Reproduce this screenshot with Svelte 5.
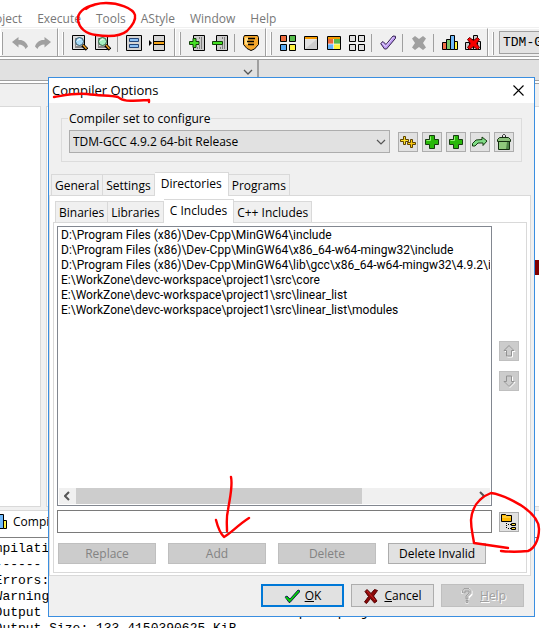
<script>
  const glyph = {
    undo: '<path d="M0 7l6.500-5v3c4.500-.5 8 2 9.500 6.500l-2.500 2.500c-1-3-3.500-4.500-7-4.500v3z" fill="#a0a0a0"/>',
    redo: '<path d="M16 7l-6.500-5v3c-4.500-.5-8 2-9.500 6.500l2.500 2.500c1-3 3.500-4.500 7-4.500v3z" fill="#a0a0a0"/>',
    find: '<path d="M.5.5h12v14H.5z" fill="#ddd" stroke="#000"/><path d="M3 4h2M3 6h1M3 8h1M3 10h1M3 12h8" stroke="#333"/><circle cx="7.500" cy="6.500" r="4" fill="#a9dcf8" stroke="#356" /><path d="M5.500 6c.5-1.500 2-2 3-1.500" stroke="#fff" fill="none"/><path d="M10.500 10l4.500 4.500" stroke="#000" stroke-width="3.500"/><path d="M11 10l3.500 3.800" stroke="#f0a020" stroke-width="1.500"/>',
    replace: '<path d="M.5.5h12v14H.5z" fill="#ddd" stroke="#000"/><path d="M3 4h2M3 6h1M3 8h1M3 10h1M3 12h8" stroke="#333"/><circle cx="7.500" cy="6.500" r="4" fill="#a5efc0" stroke="#364" /><path d="M5.500 6c.5-1.500 2-2 3-1.500" stroke="#fff" fill="none"/><path d="M10.500 10l4.500 4.500" stroke="#000" stroke-width="3.500"/><path d="M11 10l3.500 3.800" stroke="#f0a020" stroke-width="1.500"/>',
    split: '<path d="M.5.5h15v15H.5z" fill="#d4d4d4" stroke="#000"/><path d="M3.500 3.500h9v3h-9zM3.500 9.500h9v3h-9z" fill="#8ac0f5" stroke="#247"/>',
    line: '<path d="M4.500.5h11v15h-11z" fill="#d4d4d4" stroke="#000"/><path d="M4.500 6.500h11v3h-11z" fill="#f4a51c" stroke="#000"/><path d="M0 5l3 3-3 3z"/>',
    add: '<path d="M4.500.5h11v15h-11z" fill="#ccc" stroke="#000"/><path d="M10 3h1M12 3h1M12 5h1M12 7h1M12 9h1M10 11h1M12 11h1M8 13h1M10 13h1M12 13h1" stroke="#333"/><path d="M4 3.500h3v3h3v3H7v3H4v-3H.5v-3H4z" fill="#45df25" stroke="#123f09"/>',
    minus: '<path d="M4.500.5h11v15h-11z" fill="#ccc" stroke="#000"/><path d="M10 3h1M12 3h1M12 5h1M12 7h1M12 9h1M10 11h1M12 11h1M8 13h1M10 13h1M12 13h1" stroke="#333"/><path d="M.5 6.500h10v3H.5z" fill="#45df25" stroke="#123f09"/>',
    shield: '<path d="M1.500.5h13l1 2v7l-4 4.500-3.500 1.500L4 13.500.5 9.500v-7z" fill="#f5a72c" stroke="#000"/><path d="M2 2.500h3v7H2z" fill="#ffdc84"/><path d="M5 3.500h7M4 6.500h7M5 9.500h6" stroke="#000" stroke-width="1.300"/>',
    grid: '<path d="M.5.5h6v6h-6z" fill="#ee6b3c" stroke="#000"/><path d="M9.500.5h6v6h-6z" fill="#55bc4b" stroke="#000"/><path d="M.5 9.500h6v6h-6z" fill="#58a9f5" stroke="#000"/><path d="M9.500 9.500h6v6h-6z" fill="#fff33f" stroke="#000"/>',
    pane: '<path d="M1.500 1.500h13v13h-13z" fill="#e2e2e2" stroke="#000"/><path d="M2 14L14 4v10z" fill="#ccc"/><path d="M2 3h12" stroke="#f59a00" stroke-width="2"/>',
    colorpane: '<path d="M2 4h6v5H2z" fill="#e9693b"/><path d="M8 4h6v5H8z" fill="#54b94a"/><path d="M2 9h6v5H2z" fill="#65b2f7"/><path d="M8 9h6v5H8z" fill="#fff33f"/><path d="M7.500 4v10M2 9h12" stroke="#fff" stroke-width=".7"/><path d="M1.500 1.500h13v13h-13z" fill="none" stroke="#000"/><path d="M2 3h12" stroke="#f59a00" stroke-width="2"/>',
    graygrid: '<path d="M.5.5h6v6h-6zM9.500.5h6v6h-6zM.5 9.500h6v6h-6zM9.500 9.500h6v6h-6z" fill="#e0e0e0" stroke="#000"/>',
    check: '<path d="M.7 8.500l2.300-2 3 3 7-8.500 2.500.3v2L6.500 14h-2z" fill="#bd9bf2" stroke="#33204f"/><path d="M2 8l3.500 3.500 8-9.500" fill="none" stroke="#e3d2ff"/>',
    cross: '<path d="M1 3.500l3-2.500 4 3 4-3 3 2.500-3 4.500 3 4.500-3 2.500-4-3-4 3-3-2.500 3-4.500z" fill="#a0a0a0"/>',
    chart: '<path d="M.5 7.500h4v7h-4z" fill="#ef7147" stroke="#000"/><path d="M4.500 4.500h4v10h-4z" fill="#78c66b" stroke="#000"/><path d="M12.500 6.500h3v8h-3z" fill="#fff33f" stroke="#000"/><path d="M8.500.5h4v14h-4z" fill="#70b9fa" stroke="#000"/>',
    chartx: '<path d="M.5 7.500h4v7h-4zM4.500 4.500h4v10h-4zM12.500 6.500h3v8h-3zM8.500.5h4v14h-4z" fill="#ccc" stroke="#000"/><path d="M2.500 4.500l2-2 4 3 4-3 2 2-3 4 3 4-2 2-4-3-4 3-2-2 3-4z" fill="#f60000" stroke="#600"/>',
    stars: '<path d="M3.500 2.500h2v3h3v2h-3v3h-2v-3h-3v-2h3z" fill="#fde02a" stroke="#5d4300"/><path d="M10.500 5.500h2v3h3v2h-3v3h-2v-3h-3v-2h3z" fill="#fbc810" stroke="#5d4300"/>',
    plus: '<path d="M5.500 1.500h5v4h4v5h-4v4h-5v-4h-4v-5h4z" fill="#29b80b" stroke="#163c10"/><path d="M6.500 2.500v4h-4" fill="none" stroke="#8df06c"/>',
    arrow: '<path d="M.5 12v-2.500L4 6l6-.5V3l5 4-4 4.500V9L6 9l-3 3z" fill="#7fdb85" stroke="#163c10"/>',
    bin: '<path d="M6.500 3.500v-2l1-1h1l1 1v2" fill="none" stroke="#222"/><path d="M3.500 3.500h9l2 2v2h-13v-2z" fill="#8ac07a" stroke="#132e10"/><path d="M2.500 7.500h11v8h-11z" fill="#8fc97d" stroke="#132e10"/><path d="M11 8h2v7h-3z" fill="#4f8549"/>',
    up: '<path d="M9 3.500l5 5h-2.500V14h-5V8.500H4z" fill="none" stroke="#fff"/><path d="M8 2.500l5 5h-2.500V13h-5V7.500H3z" fill="#ccc" stroke="#929292"/>',
    down: '<path d="M9 14.500l5-5h-2.500V4h-5v5.500H4z" fill="none" stroke="#fff"/><path d="M8 13.500l5-5h-2.500V3h-5v5.500H3z" fill="#ccc" stroke="#929292"/>',
    folder: '<path d="M.5 7.500v-7h4l1 1h5v6z" fill="#ffb900" stroke="#000"/><path d="M1 3h9" stroke="#ffe16d"/><path d="M5.500 9v6M7 10.500h3M7 14.500h3" stroke="#000" stroke-dasharray="1 1"/><path d="M10.500 9.500h4v2h-4zM10.500 13.500h4v2h-4z" fill="#ffdd38" stroke="#000"/>',
    ok: '<path d="M1 9l2-1 3 3 8-9 1.500.5v1.500L6 14.500h-1z" fill="#00b900" stroke="#000050" stroke-width=".8"/><path d="M1.500 9L5.500 13l9-10" fill="none" stroke="#0ddd0d"/>',
    cancel: '<path d="M2 3.500l2-2 4 4 3.500-4 3 1-4 5.500 3.500 5-2.500 2-4-4.500-4 5-2-1.500 4-5.500z" fill="#8b0909" stroke="#500"/><path d="M4 3l8 9" stroke="#c22"/>',
    help: '<path d="M4 6V3.500l2-2h4l2 2v3L9 9.500v2M8 13v2.500" fill="none" stroke="#fff" stroke-width="3"/><path d="M3.500 5V2.500L5 .5h5l2 2v3L9 8.500V11H7V8l3-3V3H6v2zM7 12.500h2v2H7z" fill="#ccc" stroke="#929292" stroke-width=".8"/>'
  };

  const bands = [
    ['undo', 'redo'],
    ['find', 'replace', '|', 'split', 'line'],
    ['add', 'minus', '|', 'shield'],
    ['grid', 'pane', 'colorpane', 'graygrid', '|', 'check', '|', 'cross', '|', 'chart', 'chartx']
  ];
  const menu = ['Project', 'Execute', 'Tools', 'AStyle', 'Window', 'Help'];
  const outer = ['General', 'Settings', 'Directories', 'Programs'];
  const inner = ['Binaries', 'Libraries', 'C Includes', 'C++ Includes'];
  const paths = [
    'D:\\Program Files (x86)\\Dev-Cpp\\MinGW64\\include',
    'D:\\Program Files (x86)\\Dev-Cpp\\MinGW64\\x86_64-w64-mingw32\\include',
    'D:\\Program Files (x86)\\Dev-Cpp\\MinGW64\\lib\\gcc\\x86_64-w64-mingw32\\4.9.2\\include',
    'E:\\WorkZone\\devc-workspace\\project1\\src\\core',
    'E:\\WorkZone\\devc-workspace\\project1\\src\\linear_list',
    'E:\\WorkZone\\devc-workspace\\project1\\src\\linear_list\\modules'
  ];
  const log = `Compilation results...
--------
- Errors: 0
- Warnings: 0
- Output Filename: E:\\WorkZone\\devc-workspace\\project1\\src\\main.exe
- Output Size: 133.4150390625 KiB`;

  let outerTab = $state('Directories');
  let innerTab = $state('C Includes');
  let path = $state('');
</script>

{#snippet icon(name)}
  <svg class="icon" viewBox="0 0 16 16" aria-hidden="true">{@html glyph[name]}</svg>
{/snippet}

<div class="app">
  <nav class="menu">
    {#each menu as m}<button>{m}</button>{/each}
  </nav>
  <div class="toolbar">
    {#each bands as band}
      <div class="band">
        {#each band as b}
          {#if b === '|'}<span class="sep"></span>
          {:else}<button class="tool" aria-label={b}>{@render icon(b)}</button>{/if}
        {/each}
      </div>
    {/each}
    <div class="band last">
      <select class="profile" aria-label="Compiler profile"><option>TDM-GCC 4.9.2 64-bit Release</option></select>
    </div>
  </div>
  <div class="scope">
    <button class="combo first" aria-label="Scope">
      <svg viewBox="0 0 10 6" width="10" height="6"><path d="M1 1l4 4 4-4" fill="none" stroke="#555" stroke-width="1.3" /></svg>
    </button>
    <button class="combo" aria-label="Member"></button>
  </div>
  <main class="work">
    <div class="tree"></div>
    <div class="editor"><div class="mark"></div></div>
  </main>
  <section class="output">
    <div class="outtab">{@render icon('chart')}<span>Compile Log</span></div>
    <pre>{log}</pre>
  </section>
</div>

<div class="dialog" role="dialog" aria-labelledby="title">
  <header>
    <h1 id="title">Compiler Options</h1>
    <button class="close" aria-label="Close">
      <svg viewBox="0 0 11 11" width="11" height="11"><path d="M.5.5l10 10M10.500.5l-10 10" stroke="#000" stroke-width="1.1" /></svg>
    </button>
  </header>

  <fieldset>
    <legend><label for="set">Compiler set to configure</label></legend>
    <div class="setrow">
      <div class="pick">
        <select id="set"><option>TDM-GCC 4.9.2 64-bit Release</option></select>
        <svg viewBox="0 0 10 6" width="10" height="6"><path d="M1 1l4 4 4-4" fill="none" stroke="#555" stroke-width="1.2" /></svg>
      </div>
      {#each ['stars', 'plus', 'plus', 'arrow', 'bin'] as b}
        <button class="small" aria-label={b}>{@render icon(b)}</button>
      {/each}
    </div>
  </fieldset>

  <div class="tabs" role="tablist">
    {#each outer as t}
      <button role="tab" aria-selected={outerTab === t} class:on={outerTab === t} onclick={() => (outerTab = t)}>{t}</button>
    {/each}
  </div>
  <div class="panel">
    <div class="tabs" role="tablist">
      {#each inner as t}
        <button role="tab" aria-selected={innerTab === t} class:on={innerTab === t} onclick={() => (innerTab = t)}>{t}</button>
      {/each}
    </div>
    <div class="panel inner">
      <div class="row">
        <div class="listbox">
          <ul>
            {#each paths as p}<li>{p}</li>{/each}
          </ul>
          <div class="scroll">
            <svg viewBox="0 0 6 10" width="6" height="10"><path d="M5 1L1 5l4 4" fill="none" stroke="#555" stroke-width="2" /></svg>
            <div class="track"><div class="thumb"></div></div>
            <svg viewBox="0 0 6 10" width="6" height="10"><path d="M1 1l4 4-4 4" fill="none" stroke="#555" stroke-width="2" /></svg>
          </div>
        </div>
        <div class="side">
          <button class="small" disabled aria-label="Move up">{@render icon('up')}</button>
          <button class="small" disabled aria-label="Move down">{@render icon('down')}</button>
        </div>
      </div>
      <div class="row entry">
        <input type="text" aria-label="Directory" bind:value={path} />
        <button class="small" aria-label="Browse">{@render icon('folder')}</button>
      </div>
      <div class="row actions">
        <button disabled>Replace</button>
        <button disabled>Add</button>
        <button disabled>Delete</button>
        <button>Delete Invalid</button>
      </div>
    </div>
  </div>

  <footer>
    <button class="primary">{@render icon('ok')}<span><u>O</u>K</span></button>
    <button>{@render icon('cancel')}<span><u>C</u>ancel</span></button>
    <button class="off" disabled>{@render icon('help')}<span><u>H</u>elp</span></button>
  </footer>
</div>

<svg class="ink" viewBox="0 0 541 628" width="541" height="628" aria-hidden="true">
  <g fill="none" stroke="#f00" stroke-width="2.4" stroke-linecap="round" stroke-linejoin="round">
    <path d="M94 5C84 7 77 13 78 20C79 28 86 34 96 35C110 37 121 36 127 31C132 26 136 20 135 15C133 8 118 3 106 3C99 3 90 5 86 9" />
    <path d="M54 97C66 95 74 93 87 94C100 96 110 95 118 97C123 102 130 101 149 100L149 102" />
    <path d="M231 477C233 486 230 497 228 510C226 518 227 524 227 531M216 520C218 528 221 534 224 537C231 533 238 525 249 518" />
    <path d="M508 548L474 543C473 535 471 530 471 520C472 508 478 498 491 493C505 495 515 502 522 506C531 512 539 520 539 529C539 540 534 549 528 551C518 552 510 552 501 551" />
  </g>
</svg>

<style>
  :global(body) { margin: 0; background: #fff; }
  .app, .dialog { font: 12px/15px "Open Sans", "Noto Sans", sans-serif; color: #000; }
  .app { height: 100vh; display: flex; flex-direction: column; overflow: hidden; padding-right: 2px; box-sizing: border-box; }
  button, input, select { font: inherit; color: inherit; box-sizing: border-box; margin: 0; padding: 0; border-radius: 0; }
  .icon { width: 16px; height: 16px; flex: none; display: block; }

  .menu { height: 27px; flex: none; display: flex; gap: 15px; align-items: flex-end; padding-bottom: 1px; box-sizing: border-box; margin-left: -17px; }
  .menu button { border: 0; background: none; color: #777; }
  .toolbar { height: 30px; flex: none; display: flex; background: #f0f0f0; border-bottom: 1px solid #a0a0a0; box-sizing: border-box; padding-top: 1px; margin-bottom: 2px; }
  .band { display: flex; align-items: center; flex: none; position: relative; padding: 0 3px 0 10px; border-left: 1px solid #a0a0a0; border-top: 1px solid #fff; box-shadow: inset 1px 0 #fff; }
  .band:first-child { padding-left: 8px; border-left: 0; }
  .band:nth-child(2) { padding-right: 6px; }
  .band::before { content: ""; position: absolute; left: 4px; top: 3px; bottom: 1px; width: 1px; border-right: 1px solid #a0a0a0; background: #fff; }
  .band:first-child::before { left: 1px; }
  .tool { width: 23px; height: 23px; border: 0; background: none; display: grid; place-items: center; }
  .sep { width: 1px; height: 18px; background: #a0a0a0; margin: 0 4px 0 3px; }
  .band.last { flex: 1; min-width: 0; padding: 0 0 0 11px; overflow: hidden; }
  .profile { appearance: none; flex: 1; min-width: 0; height: 23px; background: #e3e3e3; border: 1px solid #a0a0a0; border-right: 0; padding-left: 3px; font: 13px "Liberation Mono", monospace; }
  .scope { height: 22px; flex: none; display: flex; box-sizing: border-box; border-top: 1px solid #a0a0a0; border-bottom: 1px solid #a0a0a0; }
  .combo { border: 0; background: #e1e1e1; flex: 1; }
  .combo.first { flex: 0 0 48%; border-right: 2px solid #a0a0a0; text-align: right; padding-right: 4px; }
  .work { flex: 1; display: flex; gap: 5px; background: #f0f0f0; border-top: 1px solid #a0a0a0; margin-top: 2px; padding: 22px 0 3px; }
  .tree { width: 41px; background: #fff; border: 1px solid #d9d9d9; border-left: 0; box-sizing: border-box; }
  .editor { flex: 1; background: #fff; border: 1px solid #d9d9d9; border-right: 0; padding: 153px 0 0 16px; }
  .mark { height: 15px; background: #800000; }
  .output { height: 118px; flex: none; background: #fff; border-top: 1px solid #d9d9d9; box-sizing: border-box; }
  .outtab { height: 27px; box-sizing: border-box; border-bottom: 1px solid #808080; display: flex; align-items: center; gap: 6px; margin-left: -9px; padding-bottom: 5px; }
  pre { margin: 3px 0 0 -21px; font: 13px/16px "Liberation Mono", monospace; }

  .dialog { position: absolute; left: 48px; right: 6px; top: 77px; background: #f0f0f0; border: 1px solid #3a8ee0; box-sizing: border-box; }
  header { background: #fff; height: 25px; display: flex; align-items: center; justify-content: space-between; padding: 0 10px 0 3px; }
  h1 { margin: 0; font-size: 13px; font-weight: 400; }
  .close { border: 0; background: none; display: grid; }
  fieldset { margin: 8px 12px 0; border: 1px solid #dcdcdc; padding: 4px 7px 8px; min-width: 0; }
  legend { padding: 0 1px; margin-left: -1px; height: 15px; }
  .setrow { display: flex; align-items: center; gap: 4px; }
  .pick { flex: 1; display: grid; align-items: center; margin-right: 4px; }
  .pick select, .pick svg { grid-area: 1 / 1; }
  .pick svg { justify-self: end; margin-right: 4px; pointer-events: none; }
  .pick select { appearance: none; height: 23px; width: 100%; border: 1px solid #adadad; background: #e1e1e1; padding-left: 3px; }
  .small { width: 20px; height: 20px; flex: none; border: 1px solid #adadad; background: #e1e1e1; display: grid; place-items: center; }
  .tabs { display: flex; align-items: flex-end; padding-left: 2px; height: 23px; margin-top: 10px; }
  .tabs button { height: 21px; border: 1px solid #d9d9d9; border-bottom: 0; background: #f0f0f0; padding: 0 3px; }
  .tabs button + button { border-left: 0; }
  .tabs .on { height: 24px; background: #fff; padding: 0 6px 3px; margin-bottom: -1px; position: relative; }
  .panel { background: #fff; border: 1px solid #d9d9d9; margin-right: 3px; padding: 3px 3px 2px; }
  .panel .tabs { margin-top: 0; }
  .panel.inner { margin: 0; padding: 3px 6px 8px 3px; }
  .row { display: flex; gap: 7px; }
  .listbox { flex: 1; min-width: 0; border: 1px solid #828790; height: 280px; box-sizing: border-box; display: flex; flex-direction: column; padding: 1px; }
  ul { list-style: none; margin: 0; padding: 0 0 0 2px; flex: 1; overflow: hidden; white-space: nowrap; font-family: Roboto, "Open Sans", sans-serif; }
  .scroll { height: 16px; background: #f0f0f0; display: flex; align-items: center; gap: 6px; padding: 0 5px; }
  .track { flex: 1; height: 100%; }
  .thumb { width: 72%; height: 100%; background: #cdcdcd; }
  .side { display: flex; flex-direction: column; justify-content: center; gap: 10px; }
  .side .small { margin-right: 1px; }
  .entry { margin-top: 4px; align-items: center; }
  .entry input { flex: 1; min-width: 0; height: 23px; border: 1px solid #7a7a7a; background: #fff; padding: 0 4px; }
  .entry .small { margin-right: 1px; }
  .actions { gap: 12px; margin: 10px 34px 0 1px; }
  .actions button { flex: 1; height: 21px; border: 1px solid #adadad; background: #e1e1e1; white-space: nowrap; }
  button:disabled, .actions button:disabled { background: #ccc; border-color: #bfbfbf; color: #838383; }
  footer { display: flex; justify-content: flex-end; gap: 7px; padding: 8px 10px 9px; }
  footer button { width: 83px; height: 23px; border: 1px solid #adadad; background: #e1e1e1; display: flex; align-items: center; justify-content: center; gap: 5px; }
  footer .primary { border: 2px solid #0078d7; }
  footer .off { color: #a0a0a0; text-shadow: 1px 1px #fff; }
  .ink { position: absolute; left: 0; top: 0; pointer-events: none; }
</style>
